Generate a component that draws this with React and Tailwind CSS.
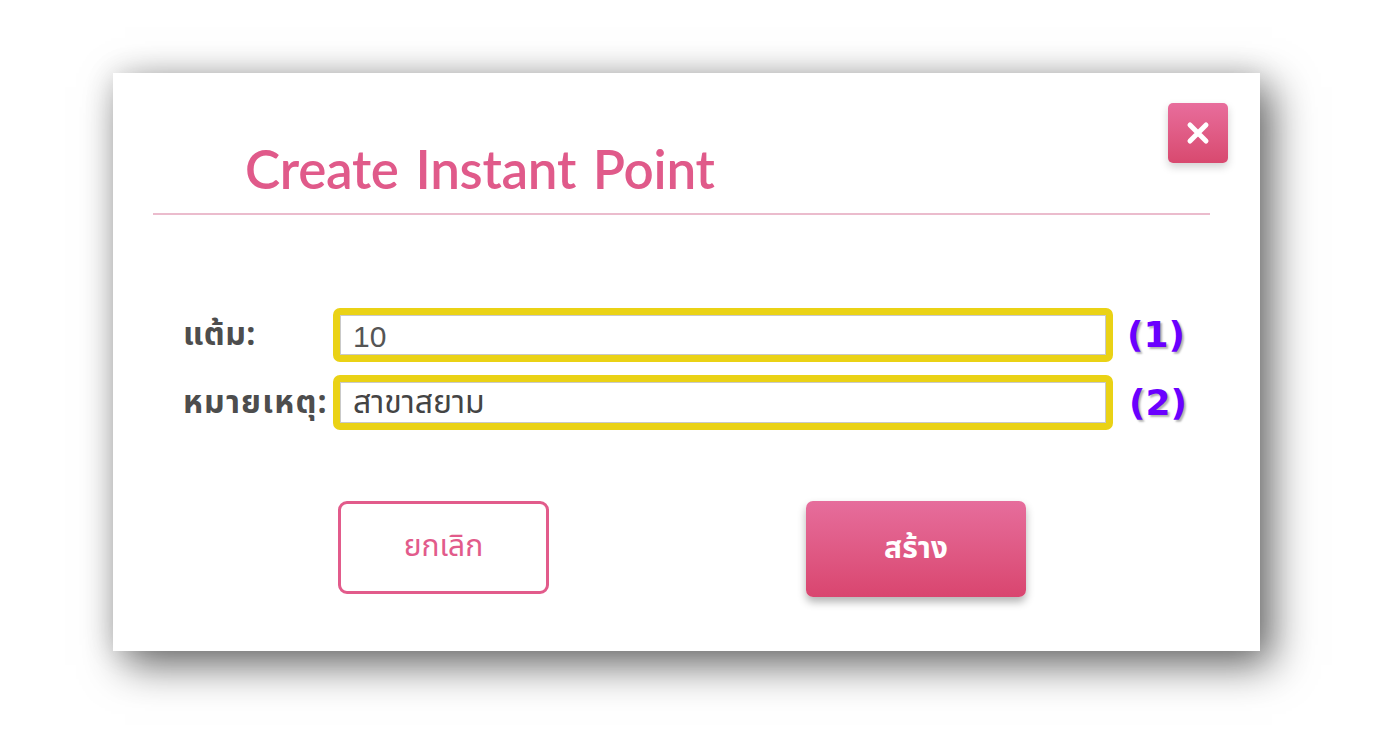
export default function App() {
  const thai = { fontFamily: 'Tahoma, "Noto Sans Thai", "Noto Sans", "DejaVu Sans", sans-serif' };
  const badge = { fontFamily: '"DejaVu Sans", Verdana, sans-serif' };
  return (
    <div className="w-[1385px] h-[745px] bg-white pt-[73px] pl-[113px] overflow-hidden">
      <div className="relative w-[1147px] h-[578px] bg-white shadow-[12px_14px_40px_rgba(0,0,0,0.58),0_0_28px_rgba(0,0,0,0.12)] flex flex-col">
        {/* close button */}
        <button className="absolute top-[30px] right-[32px] w-[60px] h-[60px] rounded-[5px] bg-gradient-to-b from-[#e86d9c] to-[#d8496f] shadow-[0_4px_8px_rgba(0,0,0,0.18)] flex items-center justify-center">
          <svg width="26" height="26" viewBox="0 0 26 26">
            <path d="M5 5 L21 21 M21 5 L5 21" stroke="white" strokeWidth="5" strokeLinecap="round" />
          </svg>
        </button>

        {/* header */}
        <div className="pt-[66px] pl-[132px]">
          <h1 className="text-[#e05a8a] text-[53px] leading-[60px] font-semibold tracking-[-0.3px] [word-spacing:4px]" style={{ fontFamily: 'Lato, "Open Sans", sans-serif' }}>
            Create Instant Point
          </h1>
        </div>
        <div className="mt-[14px] ml-[40px] mr-[50px] h-[2px] bg-[#ebbccd]" />

        {/* form */}
        <div className="mt-[93px] flex flex-col gap-[13px]">
          <div className="flex items-center">
            <div className="w-[220px] pl-[70px] text-[32px] leading-[40px] font-bold text-[#4d4d4d] tracking-[0.5px]" style={thai}>แต้ม:</div>
            <div className="w-[780px] h-[54px] border-[7px] border-[#ead215] rounded-[7px] bg-white">
              <div className="h-full border border-[#c9c9c9] pl-[12px] pt-[2px] flex items-center text-[30px] text-[#555]" style={{ fontFamily: '"Liberation Sans", Arial, sans-serif' }}>
                10
              </div>
            </div>
            <div className="ml-[14px] text-[36px] leading-[40px] font-bold text-[#6a00ff] [text-shadow:2px_2px_2px_rgba(0,0,0,0.3)]" style={badge}>(1)</div>
          </div>
          <div className="flex items-center">
            <div className="w-[220px] pl-[70px] text-[32px] leading-[40px] font-bold text-[#4d4d4d] tracking-[1.2px] whitespace-nowrap" style={thai}>หมายเหตุ:</div>
            <div className="w-[780px] h-[55px] border-[7px] border-[#ead215] rounded-[7px] bg-white">
              <div className="h-full border border-[#c9c9c9] pl-[12px] flex items-center text-[32px] leading-[40px] text-[#444]" style={thai}>
                สาขาสยาม
              </div>
            </div>
            <div className="ml-[16px] text-[36px] leading-[40px] font-bold text-[#6a00ff] [text-shadow:2px_2px_2px_rgba(0,0,0,0.3)]" style={badge}>(2)</div>
          </div>
        </div>

        {/* actions */}
        <div className="mt-[71px] pl-[225px] flex items-start gap-[257px]">
          <button className="w-[211px] h-[93px] border-[3px] border-[#e25b8b] rounded-[9px] bg-white text-[#e25b8b] text-[30px] flex items-center justify-center" style={thai}>
            ยกเลิก
          </button>
          <button className="w-[220px] h-[96px] rounded-[7px] bg-gradient-to-b from-[#e66d9c] to-[#d9456f] text-white text-[30px] font-bold shadow-[0_5px_8px_rgba(0,0,0,0.3)] flex items-center justify-center" style={thai}>
            สร้าง
          </button>
        </div>
      </div>
    </div>
  );
}
